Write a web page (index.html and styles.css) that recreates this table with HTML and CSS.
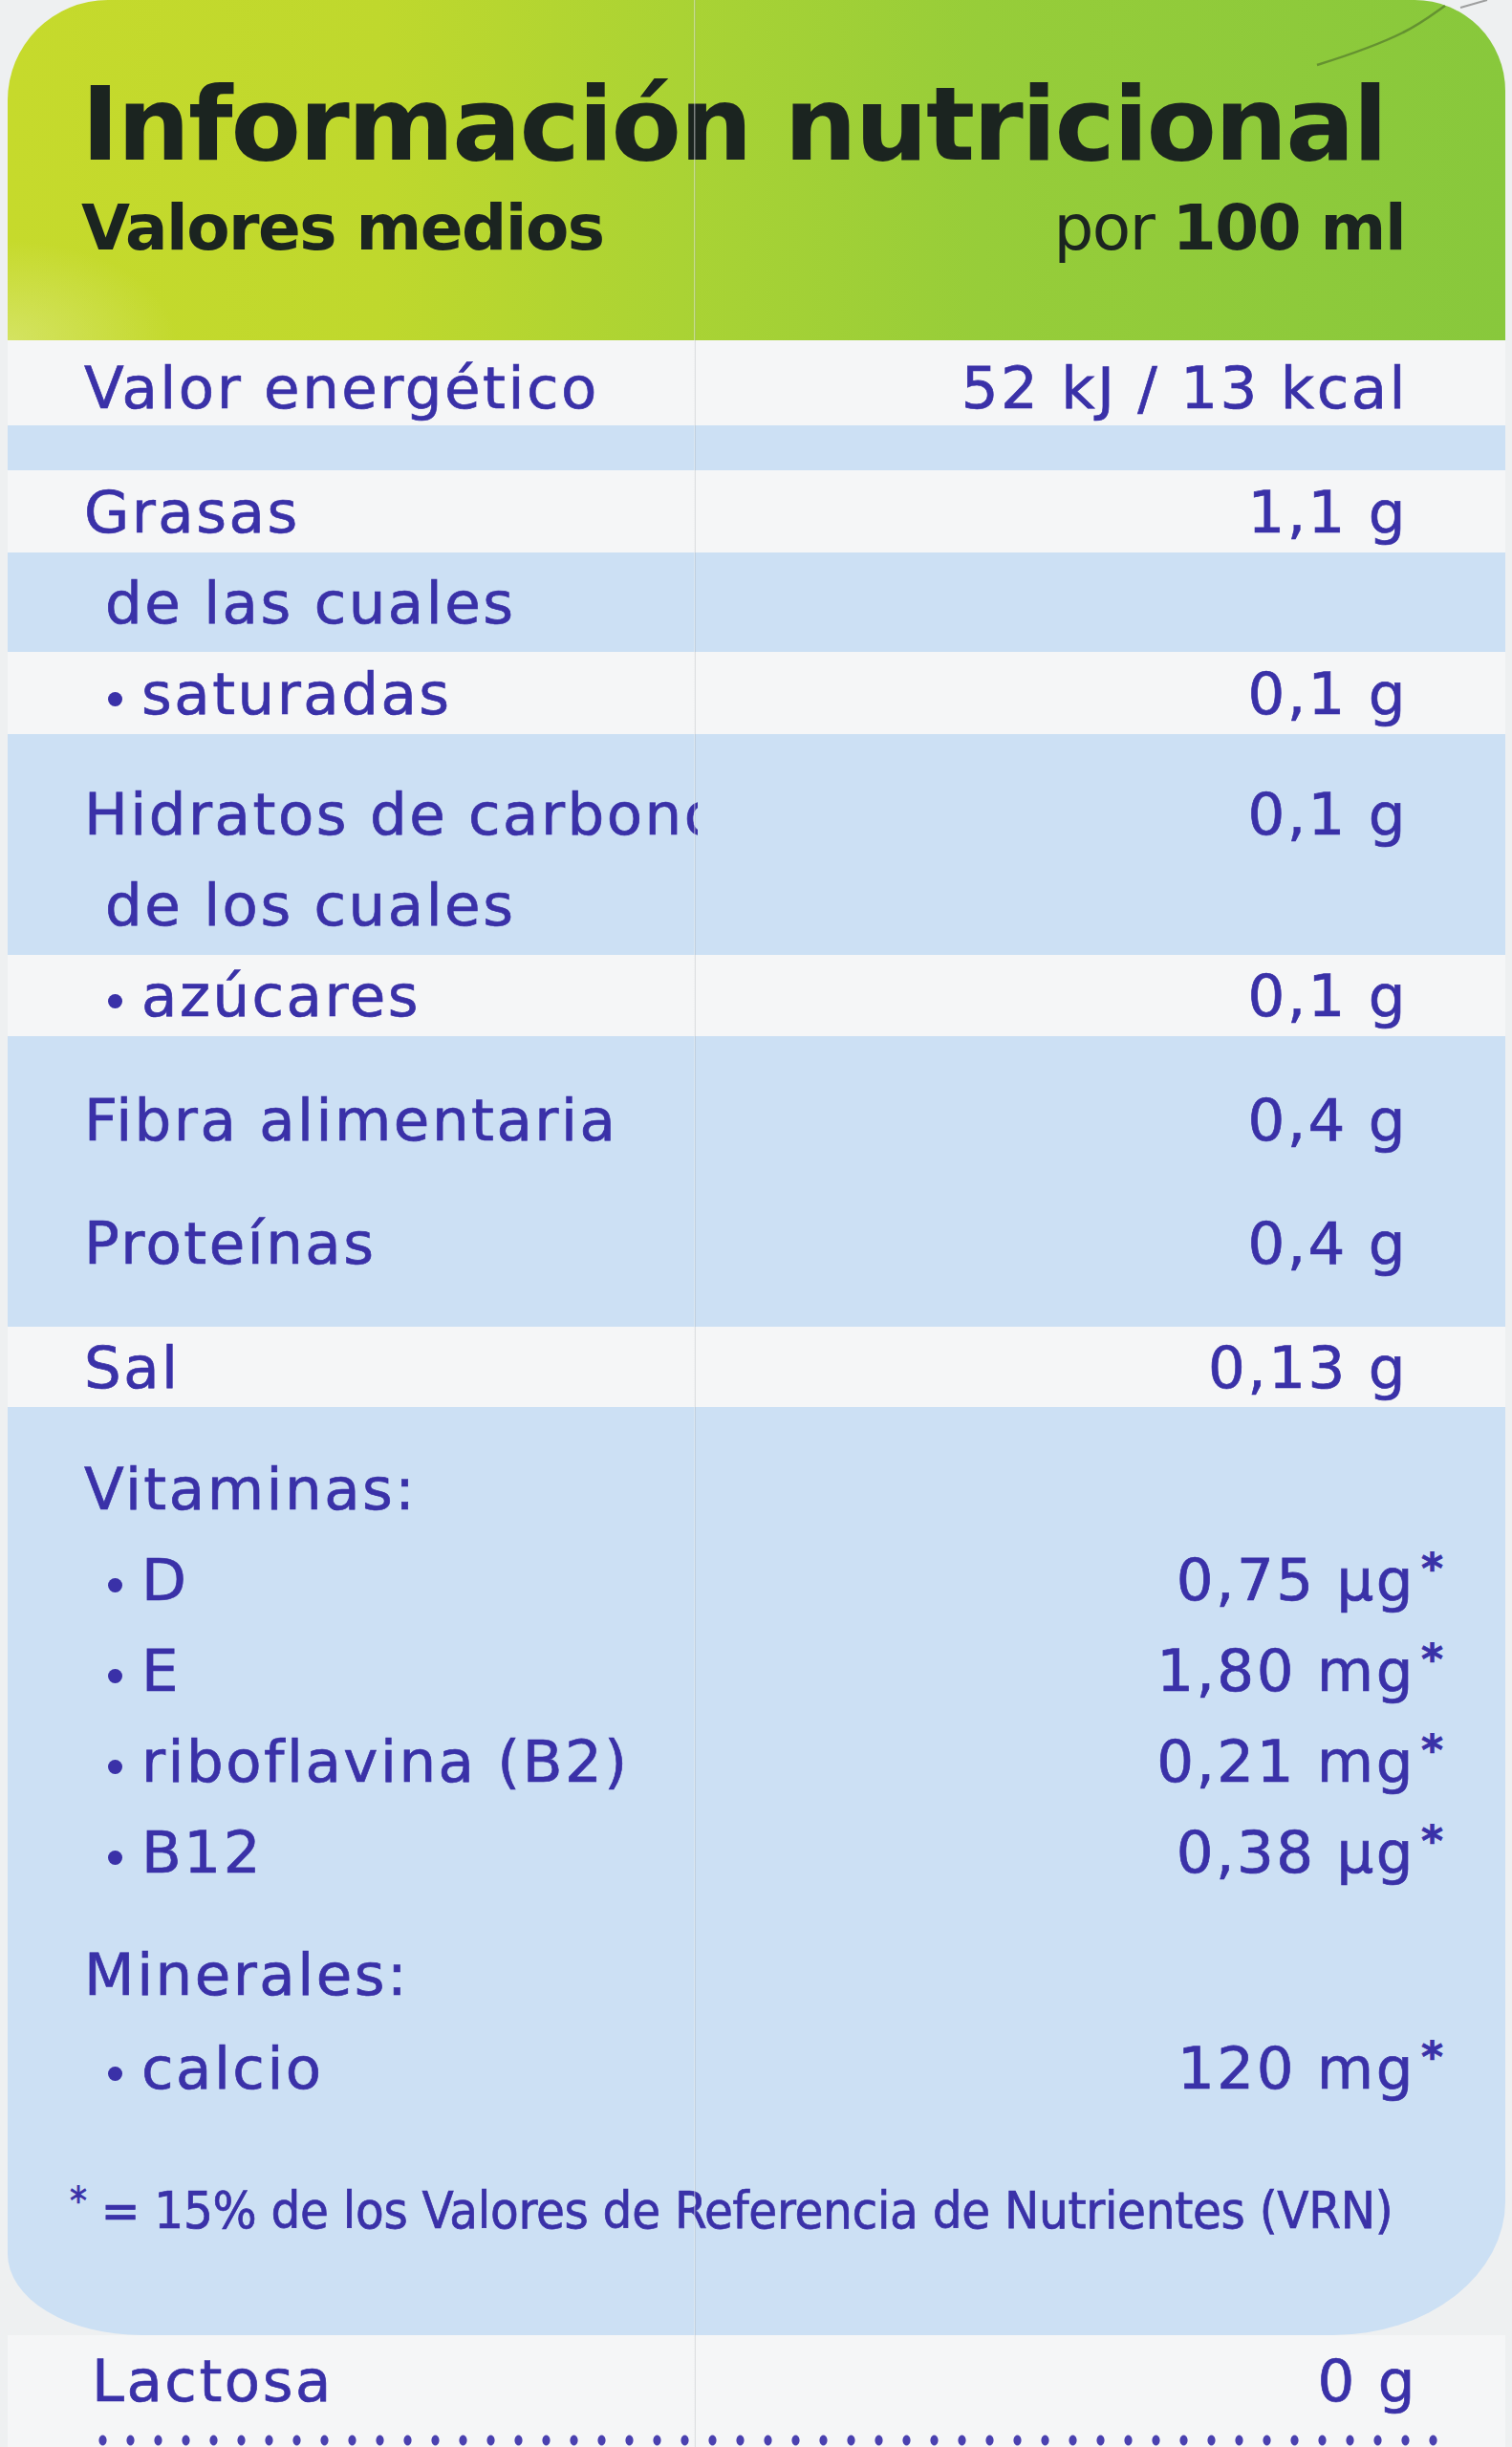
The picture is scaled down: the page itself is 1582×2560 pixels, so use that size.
FILE: index.html
```html
<!DOCTYPE html>
<html lang="es">
<head>
<meta charset="utf-8">
<title>Información nutricional</title>
<link rel="stylesheet" href="styles.css">
</head>
<body>
<div class="label">
  <header class="head">
    <h1 class="title">Información nutricional</h1>
    <div class="subhead"><span>Valores medios</span><span class="per">por <b>100 ml</b></span></div>
  </header>

  <div class="band white b-energy">
    <div class="line l-energy"><span>Valor energético</span><span>52 kJ / 13 kcal</span></div>
  </div>
  <div class="band blue b-spacer"></div>

  <div class="band white b-row">
    <div class="line l-row"><span>Grasas</span><span>1,1 g</span></div>
  </div>
  <div class="band blue b-cuales">
    <div class="line l-cuales"><span class="ind">de las cuales</span><span></span></div>
  </div>
  <div class="band white b-row">
    <div class="line l-row"><span class="sub"><i class="dot"></i>saturadas</span><span>0,1 g</span></div>
  </div>

  <div class="band blue b-hidratos">
    <div class="line"><span class="clip">Hidratos de carbono</span><span>0,1 g</span></div>
    <div class="line"><span class="ind">de los cuales</span><span></span></div>
  </div>
  <div class="band white b-row2">
    <div class="line l-row2"><span class="sub"><i class="dot"></i>azúcares</span><span>0,1 g</span></div>
  </div>

  <div class="band blue b-fibra">
    <div class="line"><span>Fibra alimentaria</span><span>0,4 g</span></div>
    <div class="line gap34"><span>Proteínas</span><span>0,4 g</span></div>
  </div>
  <div class="band white b-sal">
    <div class="line l-sal"><span>Sal</span><span>0,13 g</span></div>
  </div>

  <div class="band blue b-vit">
    <div class="line"><span>Vitaminas:</span><span></span></div>
    <div class="line star"><span class="sub"><i class="dot"></i>D</span><span>0,75 µg<sup class="ast">*</sup></span></div>
    <div class="line star"><span class="sub"><i class="dot"></i>E</span><span>1,80 mg<sup class="ast">*</sup></span></div>
    <div class="line star"><span class="sub"><i class="dot"></i>riboflavina (B2)</span><span>0,21 mg<sup class="ast">*</sup></span></div>
    <div class="line star"><span class="sub"><i class="dot"></i>B12</span><span>0,38 µg<sup class="ast">*</sup></span></div>
    <div class="line gap33"><span>Minerales:</span><span></span></div>
    <div class="line star gap3"><span class="sub"><i class="dot"></i>calcio</span><span>120 mg<sup class="ast">*</sup></span></div>
    <p class="foot"><sup class="fast">*</sup> = 15% de los Valores de Referencia de Nutrientes (VRN)</p>
  </div>

  <div class="band white b-lact">
    <div class="line l-lact"><span>Lactosa</span><span>0 g</span></div>
    <div class="dots"></div>
  </div>
</div>

<div class="fold"></div>
<svg class="curl" width="212" height="80" viewBox="0 0 212 80" aria-hidden="true">
  <path d="M8 68 C 40 58, 70 48, 98 34 C 115 26, 128 16, 142 6" fill="none" stroke="rgba(70,100,40,0.55)" stroke-width="2.5"/>
  <path d="M158 8 L 186 0" fill="none" stroke="rgba(60,60,60,0.45)" stroke-width="2"/>
</svg>
</body>
</html>
```
FILE: styles.css
```css
html, body {
  margin: 0;
  padding: 0;
  background: #eef0f1;
}

body {
  width: 1582px;
  height: 2560px;
  overflow: hidden;
  position: relative;
  font-family: "DejaVu Sans", "Open Sans", sans-serif;
  color: #3a31a8;
}

.label {
  margin-left: 8px;
  width: 1567px;
}

/* ---------- green header ---------- */
.head {
  height: 356px;
  box-sizing: border-box;
  padding: 77px 105px 0 77px;
  border-radius: 105px 95px 0 0;
  color: #1b2420;
  background:
    radial-gradient(ellipse 220px 130px at 0% 100%, rgba(226, 236, 150, 0.5), rgba(226, 236, 150, 0) 80%),
    linear-gradient(90deg, #c6da2c 0%, #bfd82d 25%, #aad334 45%, #97cd39 65%, #88c83c 100%);
}

.title {
  margin: 0;
  font-size: 107px;
  line-height: 107px;
  font-weight: bold;
  letter-spacing: -2px;
  white-space: nowrap;
}

.subhead {
  display: flex;
  justify-content: space-between;
  margin-top: 22px;
  font-size: 66px;
  line-height: 66px;
  font-weight: bold;
  letter-spacing: -1.5px;
  white-space: nowrap;
}

.per {
  font-weight: normal;
}

.per b {
  font-weight: bold;
}

/* ---------- table bands ---------- */
.band {
  box-sizing: border-box;
  padding: 0 105px 0 80px;
  font-size: 61px;
  letter-spacing: 2.5px;
  -webkit-text-stroke: 0.7px currentColor;
}

.white {
  background: #f5f6f7;
}

.blue {
  background: #cce0f4;
}

.line {
  display: flex;
  justify-content: space-between;
  align-items: center;
  height: 95px;
  white-space: nowrap;
}

.line > span:last-child {
  margin-right: -3px;
}

.ind {
  padding-left: 22px;
}

.sub {
  padding-left: 25px;
}

.dot {
  display: inline-block;
  width: 15px;
  height: 15px;
  border-radius: 50%;
  background: currentColor;
  vertical-align: 0.13em;
  margin-right: 20px;
}

.clip {
  display: block;
  width: 642px;
  overflow: hidden;
}

.b-energy { height: 89px; padding-top: 10px; }
.l-energy { height: 79px; }
.b-spacer { height: 47px; }
.b-row { height: 86px; }
.l-row { height: 86px; }
.b-cuales { height: 104px; }
.l-cuales { height: 104px; }
.b-hidratos { height: 231px; padding-top: 36px; }
.b-row2 { height: 85px; }
.l-row2 { height: 85px; }
.b-fibra { height: 304px; padding-top: 40px; }
.gap34 { margin-top: 34px; }
.b-sal { height: 84px; }
.l-sal { height: 84px; }

.b-vit {
  height: 971px;
  padding-top: 38px;
  padding-right: 68px;
  border-radius: 0 0 180px 140px / 0 0 140px 85px;
}

.b-vit .line:not(.star) {
  padding-right: 40px;
}

.gap33 { margin-top: 33px; }
.gap3 { margin-top: 3px; }

.ast {
  font-size: 44px;
  font-weight: bold;
  vertical-align: 0.4em;
  line-height: 0;
  margin-left: 6px;
  letter-spacing: 0;
}

.foot {
  margin: 72px 0 0 -15px;
  height: 60px;
  line-height: 60px;
  font-family: "DejaVu Sans Condensed", "DejaVu Sans", sans-serif;
  font-stretch: condensed;
  font-size: 54px;
  letter-spacing: -0.3px;
  white-space: nowrap;
}

.fast {
  font-size: 40px;
  vertical-align: 0.35em;
  line-height: 0;
}

.b-lact {
  height: 117px;
  padding-left: 88px;
  padding-right: 95px;
}

.l-lact { height: 95px; }

.dots {
  margin: 9px 0 0 -3px;
  height: 12px;
  width: 1430px;
  background: radial-gradient(ellipse 4.5px 6px at center, #4a41b0 80%, rgba(74, 65, 176, 0) 100%) 0 0 / 29px 12px repeat-x;
}

/* ---------- overlays ---------- */
.fold {
  position: absolute;
  left: 726px;
  top: 0;
  width: 2px;
  height: 2560px;
  background: linear-gradient(90deg, rgba(255, 255, 255, 0.55), rgba(90, 100, 110, 0.22));
  pointer-events: none;
}

.curl {
  position: absolute;
  left: 1370px;
  top: 0;
  pointer-events: none;
}
```
